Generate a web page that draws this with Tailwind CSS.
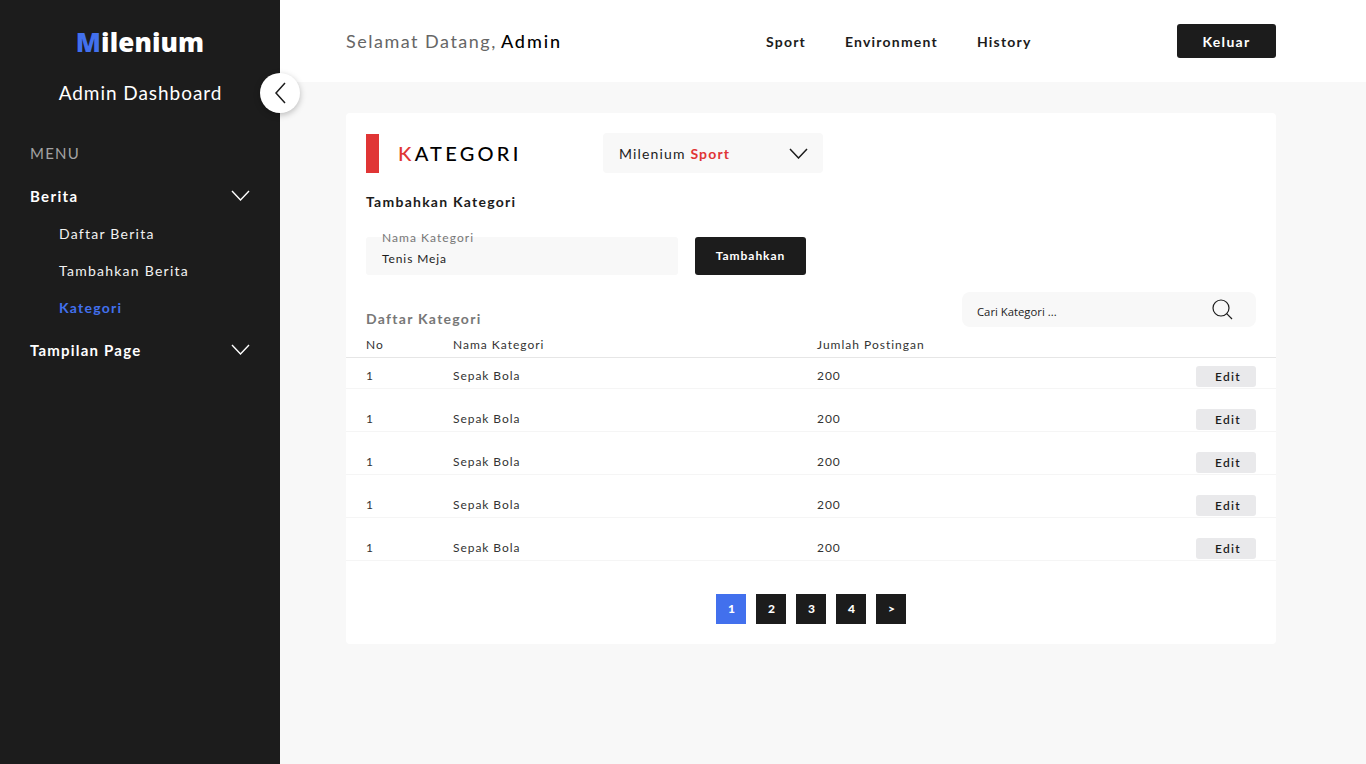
<!DOCTYPE html>
<html lang="id">
<head>
<meta charset="utf-8">
<script src="https://cdn.jsdelivr.net/npm/@tailwindcss/browser@4"></script>
<title>Milenium</title>
</head>
<body class="font-['Lato',sans-serif] bg-[#f8f8f8] antialiased">
<div class="flex h-[764px] w-[1366px] overflow-hidden">
  <aside class="relative w-[280px] shrink-0 bg-[#1c1c1c] text-white">
    <div class="pt-[24px] text-center font-['Open_Sans',sans-serif] text-[26px] leading-[36px] font-extrabold tracking-[0.12px]"><span class="text-[#4270ed]">M</span>ilenium</div>
    <div class="mt-[18px] pl-[1px] text-center text-[19px] leading-[30px] tracking-[0.95px]">Admin Dashboard</div>
    <button class="absolute left-[260px] top-[73px] z-10 flex h-[40px] w-[40px] items-center justify-center rounded-full bg-white shadow-[0_2px_6px_rgba(0,0,0,0.25)]">
      <svg width="12" height="22" viewBox="0 0 12 22" fill="none" stroke="#1c1c1c" stroke-width="1.5"><path d="M11 1 L2 11 L11 21"/></svg>
    </button>
    <div class="mt-[35px] px-[30px] text-[15px] leading-[20px] tracking-[1.2px] text-[#a3a3a3]">MENU</div>
    <div class="mt-[23px] flex h-[20px] items-center justify-between pl-[30px] pr-[30px]">
      <span class="text-[15px] font-bold tracking-[1.35px]">Berita</span>
      <svg width="19" height="11" viewBox="0 0 19 11" fill="none" stroke="#fff" stroke-width="1.4" class="-mt-[2px]"><path d="M1 1 L9.5 10 L18 1"/></svg>
    </div>
    <div class="mt-[18px] flex flex-col gap-[17px] pl-[59px] text-[14px] leading-[20px] tracking-[1.25px]">
      <a class="text-[#f2f2f2]">Daftar Berita</a>
      <a class="text-[#f2f2f2]">Tambahkan Berita</a>
      <a class="font-bold text-[#4270ed]">Kategori</a>
    </div>
    <div class="mt-[22px] flex h-[20px] items-center justify-between pl-[30px] pr-[30px]">
      <span class="text-[15px] font-bold tracking-[1.2px]">Tampilan Page</span>
      <svg width="19" height="11" viewBox="0 0 19 11" fill="none" stroke="#fff" stroke-width="1.4" class="-mt-[2px]"><path d="M1 1 L9.5 10 L18 1"/></svg>
    </div>
  </aside>
  <div class="flex-1">
    <header class="flex h-[82px] items-center bg-white pl-[66px] pr-[90px]">
      <div class="w-[420px] text-[18px] tracking-[1.5px] text-[#666]">Selamat Datang, <span class="-ml-[2px] font-medium tracking-[1.9px] text-black">Admin</span></div>
      <nav class="flex gap-[39px] text-[14px] font-bold tracking-[1.2px] text-[#1c1c1c]">
        <a>Sport</a><a>Environment</a><a>History</a>
      </nav>
      <button class="ml-auto h-[34px] w-[99px] rounded-[3px] bg-[#1c1c1c] text-[14px] font-bold tracking-[1.3px] text-white">Keluar</button>
    </header>
    <main class="pl-[66px] pr-[90px] pt-[31px]">
      <section class="h-[531px] rounded-[4px] bg-white pt-[20px]">
        <div class="flex items-center pl-[20px]">
          <div class="h-[39px] w-[13px] bg-[#e03535]"></div>
          <h1 class="ml-[19px] w-[205px] text-[20px] font-medium tracking-[3.25px] text-black"><span class="text-[#e03535]">K</span>ATEGORI</h1>
          <div class="flex h-[40px] w-[220px] items-center justify-between rounded-[4px] bg-[#f8f8f8] pl-[16px] pr-[15px] text-[14px] tracking-[1.15px] text-[#1c1c1c]">
            <span>Milenium <span class="font-bold text-[#e03535]">Sport</span></span>
            <svg width="19" height="11" viewBox="0 0 19 11" fill="none" stroke="#1c1c1c" stroke-width="1.5"><path d="M1 1 L9.5 10 L18 1"/></svg>
          </div>
        </div>
        <h2 class="mt-[19px] pl-[20px] text-[14px] leading-[20px] font-bold tracking-[1.25px] text-[#1c1c1c]">Tambahkan Kategori</h2>
        <div class="mt-[25px] flex pl-[20px]">
          <div class="relative h-[38px] w-[312px] rounded-[3px] bg-[#f8f8f8] pl-[16px] pt-[13px] text-[12px] leading-[18px] tracking-[0.9px] text-[#1c1c1c]">
            <span class="absolute left-[16px] -top-[7px] text-[12px] leading-[16px] tracking-[1.05px] text-[#777]">Nama Kategori</span>
            Tenis Meja
          </div>
          <button class="ml-[17px] h-[38px] w-[111px] rounded-[3px] bg-[#1c1c1c] text-[12px] font-bold tracking-[0.95px] text-white">Tambahkan</button>
        </div>
        <div class="mt-[17px] flex items-start justify-between px-[20px]">
          <h3 class="mt-[17px] text-[14px] leading-[20px] font-bold tracking-[1.27px] text-[#777]">Daftar Kategori</h3>
          <div class="flex h-[35px] w-[294px] items-center justify-between rounded-[8px] bg-[#f8f8f8] pl-[15px] pr-[24px] font-['Open_Sans',sans-serif] text-[11.3px] text-[#1c1c1c]">
            <span class="pt-[5px]">Cari Kategori ...</span>
            <svg width="21" height="21" viewBox="0 0 21 21" fill="none" stroke="#1c1c1c" stroke-width="1.2" class="translate-x-[1px]"><circle cx="9" cy="9" r="8"/><path d="M14.7 14.7 L20 20"/></svg>
          </div>
        </div>
        <div class="mt-[6px] flex h-[23px] items-start border-b border-[#e6e6e6] px-[20px] text-[12px] leading-[20px] tracking-[1px] text-[#333]">
          <span class="w-[87px]">No</span><span class="w-[364px]">Nama Kategori</span><span>Jumlah Postingan</span>
        </div>
        <div class="flex h-[31px] items-start border-b border-[#f5f5f5] px-[20px] pt-[8px] text-[12px] leading-[20px] tracking-[0.95px] text-[#333]">
          <span class="w-[87px]">1</span><span class="w-[364px]">Sepak Bola</span><span>200</span>
          <button class="ml-auto h-[21px] w-[60px] rounded-[3px] bg-[#e9e9eb] pl-[4px] text-[12px] font-semibold tracking-[1.35px] text-[#1c1c1c]">Edit</button>
        </div>
        <div class="mt-[12px] flex h-[31px] items-start border-b border-[#f5f5f5] px-[20px] pt-[8px] text-[12px] leading-[20px] tracking-[0.95px] text-[#333]">
          <span class="w-[87px]">1</span><span class="w-[364px]">Sepak Bola</span><span>200</span>
          <button class="ml-auto h-[21px] w-[60px] rounded-[3px] bg-[#e9e9eb] pl-[4px] text-[12px] font-semibold tracking-[1.35px] text-[#1c1c1c]">Edit</button>
        </div>
        <div class="mt-[12px] flex h-[31px] items-start border-b border-[#f5f5f5] px-[20px] pt-[8px] text-[12px] leading-[20px] tracking-[0.95px] text-[#333]">
          <span class="w-[87px]">1</span><span class="w-[364px]">Sepak Bola</span><span>200</span>
          <button class="ml-auto h-[21px] w-[60px] rounded-[3px] bg-[#e9e9eb] pl-[4px] text-[12px] font-semibold tracking-[1.35px] text-[#1c1c1c]">Edit</button>
        </div>
        <div class="mt-[12px] flex h-[31px] items-start border-b border-[#f5f5f5] px-[20px] pt-[8px] text-[12px] leading-[20px] tracking-[0.95px] text-[#333]">
          <span class="w-[87px]">1</span><span class="w-[364px]">Sepak Bola</span><span>200</span>
          <button class="ml-auto h-[21px] w-[60px] rounded-[3px] bg-[#e9e9eb] pl-[4px] text-[12px] font-semibold tracking-[1.35px] text-[#1c1c1c]">Edit</button>
        </div>
        <div class="mt-[12px] flex h-[31px] items-start border-b border-[#f5f5f5] px-[20px] pt-[8px] text-[12px] leading-[20px] tracking-[0.95px] text-[#333]">
          <span class="w-[87px]">1</span><span class="w-[364px]">Sepak Bola</span><span>200</span>
          <button class="ml-auto h-[21px] w-[60px] rounded-[3px] bg-[#e9e9eb] pl-[4px] text-[12px] font-semibold tracking-[1.35px] text-[#1c1c1c]">Edit</button>
        </div>
        <div class="mt-[33px] flex justify-center gap-[10px] text-[12px] font-black text-white">
          <a class="flex h-[30px] w-[30px] items-center justify-center bg-[#4270ed] pl-[1px]">1</a>
          <a class="flex h-[30px] w-[30px] items-center justify-center bg-[#1c1c1c] pl-[1px]">2</a>
          <a class="flex h-[30px] w-[30px] items-center justify-center bg-[#1c1c1c] pl-[1px]">3</a>
          <a class="flex h-[30px] w-[30px] items-center justify-center bg-[#1c1c1c] pl-[1px]">4</a>
          <a class="flex h-[30px] w-[30px] items-center justify-center bg-[#1c1c1c] pl-[1px]">&gt;</a>
        </div>
      </section>
    </main>
  </div>
</div>
</body>
</html>
